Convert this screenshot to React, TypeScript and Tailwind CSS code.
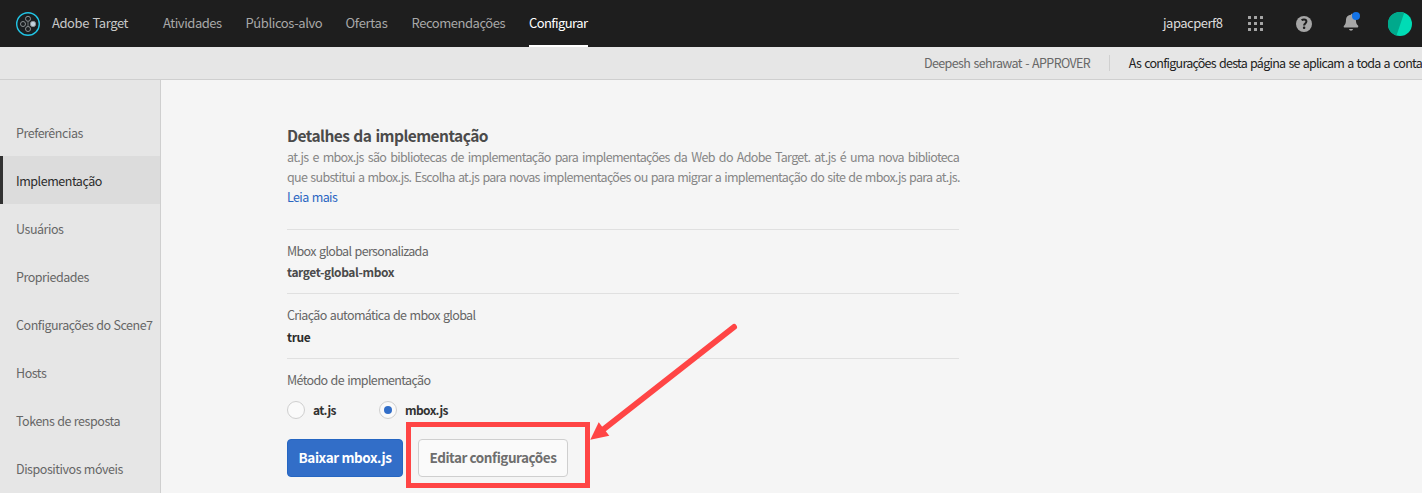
const navItems = [
  { label: "Atividades", cls: "w-[82.5px] tracking-[-0.45px]" },
  { label: "Públicos-alvo", cls: "w-[100px] tracking-[-0.4px]" },
  { label: "Ofertas", cls: "w-[66px] tracking-[-0.29px]" },
  { label: "Recomendações", cls: "w-[117.5px] tracking-[-0.46px]" },
];

const sideItems = [
  "Preferências",
  "Implementação",
  "Usuários",
  "Propriedades",
  "Configurações do Scene7",
  "Hosts",
  "Tokens de resposta",
  "Dispositivos móveis",
];

function Logo() {
  return (
    <svg className="h-6 w-6 shrink-0" viewBox="0 0 24 24" fill="none">
      <circle cx="12" cy="12" r="11.3" fill="#1a1e20" stroke="#22c4e4" strokeWidth="1.4" />
      <g stroke="#8b9092" strokeWidth="1">
        <circle cx="12" cy="6.8" r="2.5" />
        <circle cx="12" cy="17" r="2.5" />
        <circle cx="7" cy="12" r="2.5" />
        <path d="M12 9.5v5" strokeWidth="0.8" />
      </g>
      <circle cx="17" cy="12" r="2.7" fill="#c3d3de" stroke="#8b9092" strokeWidth="0.8" />
    </svg>
  );
}

function AppsIcon() {
  return (
    <svg className="h-4 w-4 shrink-0" viewBox="0 0 16 16" fill="#a6a6a6">
      {[0, 6, 12].map((y) => [0, 6, 12].map((x) => <rect key={`${x}-${y}`} x={x} y={y} width="3" height="3" rx="0.3" />))}
    </svg>
  );
}

function HelpIcon() {
  return (
    <svg className="h-4 w-4 shrink-0" viewBox="0 0 16 16">
      <circle cx="8" cy="8" r="8" fill="#a6a6a6" />
      <path d="M5.6 4.3c.6-.5 1.4-.8 2.4-.8 1.5 0 2.400.8 2.400 2 0 1.900-2.300 2-2.300 4" fill="none" stroke="#1e1e1e" strokeWidth="2" />
      <rect x="6.900" y="10.600" width="2.400" height="2.400" rx="1" fill="#1e1e1e" />
    </svg>
  );
}

function BellIcon() {
  return (
    <svg className="h-[20px] w-[18px] shrink-0" viewBox="0 0 18 20">
      <path
        d="M8 2.800c0-.6.4-1 1-1h.5c-.3 3.200 1.200 5 3.300 5.200.2 4 .8 5.200 2.200 6.600.4.400.5 1.800-.3 1.800H1.300c-.8 0-.8-1.200-.3-1.700 1.300-1.300 2-2.700 2-6.200C3 5 5 3.200 8 2.800z"
        fill="#a6a6a6"
      />
      <path d="M6 17h4c-.2 1-1 1.700-2 1.700S6.200 18 6 17z" fill="#a6a6a6" />
      <circle cx="13" cy="4" r="4" fill="#1473e6" />
    </svg>
  );
}

function Avatar() {
  return (
    <svg className="h-6 w-6 shrink-0" viewBox="0 0 24 24">
      <circle cx="12" cy="12" r="12" fill="#00dcb5" />
      <path d="M16.200.8A12 12 0 1 0 8.500 23.500z" fill="#00a98c" />
    </svg>
  );
}

function Field({ label, value, valueCls, gap }: { label: string; value: string; valueCls: string; gap: string }) {
  return (
    <div className="border-t border-[#e0e0e0] pt-[11px]">
      <div className="h-5 text-[12.5px] leading-5 tracking-[-0.65px] text-[#666]">{label}</div>
      <div className={`h-5 text-[12px] font-bold leading-5 tracking-[-0.4px] ${gap} ${valueCls}`}>{value}</div>
    </div>
  );
}

export default function App() {
  return (
    <div className="relative flex h-[493px] w-full flex-col overflow-hidden whitespace-nowrap bg-[#f5f5f5] font-['Noto_Sans_CJK_SC','Source_Sans_Pro',sans-serif] [word-spacing:1px]">
      <header className="flex h-[47px] shrink-0 items-center bg-[#1e1e1e] pl-4 pr-[10px] text-[13px] text-[#a8a8a8]">
        <Logo />
        <span className="ml-3 w-[111px] pb-0.5 leading-5 tracking-[-0.42px] text-[#c8c8c8]">Adobe Target</span>
        <nav className="flex h-full">
          {navItems.map((n) => (
            <a key={n.label} className={`pt-[13px] leading-5 ${n.cls}`}>{n.label}</a>
          ))}
          <a className="h-full w-[59px] border-b-2 border-white pt-[13px] leading-5 tracking-[-0.58px] text-white">Configurar</a>
        </nav>
        <div className="ml-auto flex items-center">
          <span className="w-[85px] pb-0.5 leading-5 tracking-[-0.5px] text-[#dcdcdc]">japacperf8</span>
          <AppsIcon />
          <span className="ml-8 flex"><HelpIcon /></span>
          <span className="mb-[3px] ml-[31px] flex"><BellIcon /></span>
          <span className="ml-[27px] flex"><Avatar /></span>
        </div>
      </header>

      <div className="flex h-[33px] shrink-0 items-start border-b border-[#cfcfcf] bg-[#e6e6e6] pl-[924px] pt-2 text-[12.5px] leading-4">
        <span className="w-[185px] tracking-[-0.61px] text-[#686868]">Deepesh sehrawat - APPROVER</span>
        <span className="h-4 w-px bg-[#d0d0d0]" />
        <span className="ml-[19px] tracking-[-0.74px] text-[#222]">As configurações desta página se aplicam a toda a conta</span>
      </div>

      <div className="flex min-h-0 flex-1">
        <aside className="w-[161px] shrink-0 overflow-hidden border-r border-[#cfcfcf] bg-[#e6e6e6] pt-7 text-[12.5px] tracking-[-0.46px] [word-spacing:0.5px]">
          {sideItems.map((s) => (
            <div
              key={s}
              className={
                s === "Implementação"
                  ? "h-12 border-l-[3px] border-[#323232] bg-[#dcdcdc] pl-[13px] leading-[50px] text-[#2c2c2c]"
                  : "h-12 pl-4 leading-[50px] text-[#666]"
              }
            >
              {s}
            </div>
          ))}
        </aside>

        <main className="ml-[126px] w-[672px] pt-11">
          <h2 className="h-[23px] text-[15.5px] font-bold leading-[22px] tracking-[-0.54px] text-[#4b4b4b]">Detalhes da implementação</h2>
          <div className="h-[82px] text-[12.5px] leading-5 tracking-[-0.68px] text-[#868686]">
            <p className="[text-align-last:justify]">
              at.js e mbox.js são bibliotecas de implementação para implementações da Web do Adobe Target. at.js é uma nova biblioteca
            </p>
            <p className="[text-align-last:justify]">
              que substitui a mbox.js. Escolha at.js para novas implementações ou para migrar a implementação do site de mbox.js para at.js.
            </p>
            <a className="tracking-[-0.62px] text-[#2b66c2]">Leia mais</a>
          </div>

          <div className="h-16"><Field label="Mbox global personalizada" value="target-global-mbox" gap="mt-px" valueCls="text-[#4b4b4b]" /></div>
          <div className="h-[65px]"><Field label="Criação automática de mbox global" value="true" gap="mt-0.5" valueCls="text-[#2c2c2c]" /></div>
          <div className="border-t border-[#e0e0e0] pt-[11px]">
            <div className="h-5 text-[12.5px] leading-5 tracking-[-0.65px] text-[#666]">Método de implementação</div>
            <div className="mt-[11px] flex h-[18px] items-center text-[12px] font-bold leading-[18px] tracking-[-0.6px] text-[#323232]">
              <span className="h-[18px] w-[18px] rounded-full border border-[#cfcfcf] bg-[#fafafa]" />
              <span className="ml-2 w-[58px]">at.js</span>
              <span className="ml-2 flex h-[18px] w-[18px] items-center justify-center rounded-full border border-[#cfcfcf] bg-[#fafafa]">
                <span className="h-2 w-2 rounded-full bg-[#326ec8]" />
              </span>
              <span className="ml-2">mbox.js</span>
            </div>
            <div className="mt-5 flex gap-[15px] text-[13.5px] font-bold">
              <button className="h-[38px] w-[116px] rounded border border-[#2566c2] bg-[#326ec8] pb-0.5 tracking-[-0.4px] leading-[34px] text-white">Baixar mbox.js</button>
              <button className="h-[38px] w-[150px] rounded border border-[#cfcfcf] bg-[#fafafa] pb-0.5 tracking-[-0.45px] leading-[34px] text-[#6e6e6e]">Editar configurações</button>
            </div>
          </div>
        </main>
      </div>

      <div className="absolute left-[406px] top-[422px] h-[66px] w-[184px] border-[5px] border-[#ff4545]" />
      <svg className="absolute left-[586px] top-[320px] h-[124px] w-[156px]" viewBox="586 320 156 124">
        <path d="M734 327L602 430.500" stroke="#ff4545" strokeWidth="6" strokeLinecap="round" />
        <path d="M590.300 439.700L598.700 422.300L609.300 435.700z" fill="#ff4545" />
      </svg>
    </div>
  );
}
